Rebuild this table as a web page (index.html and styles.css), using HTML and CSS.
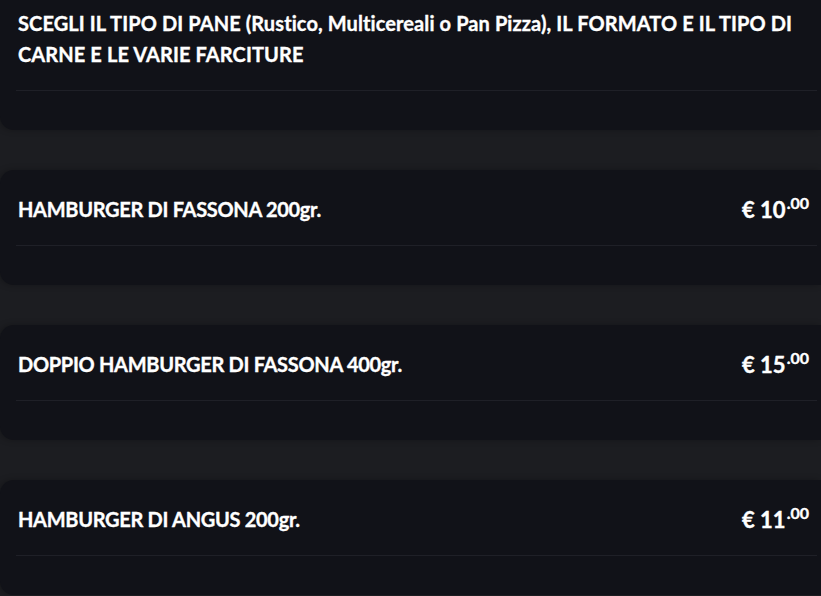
FILE: index.html
```html
<!DOCTYPE html>
<html lang="it">
<head>
<meta charset="utf-8">
<title>Menu</title>
<link rel="stylesheet" href="styles.css">
</head>
<body>
<div class="list">
  <section class="card">
    <div class="row">
      <h3 class="name name-long">SCEGLI IL TIPO DI PANE (Rustico, Multicereali o Pan Pizza), IL FORMATO E IL TIPO DI CARNE E LE VARIE FARCITURE</h3>
    </div>
    <div class="sep"></div>
  </section>
  <section class="card">
    <div class="row">
      <h3 class="name">HAMBURGER DI FASSONA 200gr.</h3>
      <div class="price">€ 10<sup>.00</sup></div>
    </div>
    <div class="sep"></div>
  </section>
  <section class="card">
    <div class="row">
      <h3 class="name">DOPPIO HAMBURGER DI FASSONA 400gr.</h3>
      <div class="price">€ 15<sup>.00</sup></div>
    </div>
    <div class="sep"></div>
  </section>
  <section class="card">
    <div class="row">
      <h3 class="name">HAMBURGER DI ANGUS 200gr.</h3>
      <div class="price">€ 11<sup>.00</sup></div>
    </div>
    <div class="sep"></div>
  </section>
</div>
</body>
</html>
```
FILE: styles.css
```css
html, body {
  margin: 0;
  padding: 0;
  background: #1c1d21;
  overflow: hidden;
}
body {
  font-family: Lato, "Liberation Sans", sans-serif;
  color: #ffffff;
}
.list {
  display: flex;
  flex-direction: column;
  gap: 40px;
  margin-top: -16px;
}
.card {
  background: #111218;
  border-radius: 14px 0 0 14px;
  box-shadow: -2px 0 6px rgba(0,0,0,0.25);
  padding: 0 0 39px 0;
}
.row {
  display: flex;
  align-items: center;
  justify-content: space-between;
  padding: 24px 12px 20px 18px;
}
.name {
  margin: 0;
  font-size: 20px;
  font-weight: 700;
  line-height: 31px;
  letter-spacing: -0.3px;
  -webkit-text-stroke: 0.35px #ffffff;
}
.name-long {
  letter-spacing: 0.1px;
}
.price {
  font-size: 22px;
  font-weight: 700;
  white-space: nowrap;
  line-height: 31px;
  height: 31px;
  -webkit-text-stroke: 0.4px #ffffff;
}
.price sup {
  font-size: 16px;
  line-height: 0;
  vertical-align: 0;
  position: relative;
  top: -9px;
  margin-left: 1px;
}
.sep {
  height: 1px;
  background: #1f2027;
  margin: 0 4px 0 16px;
}
```
